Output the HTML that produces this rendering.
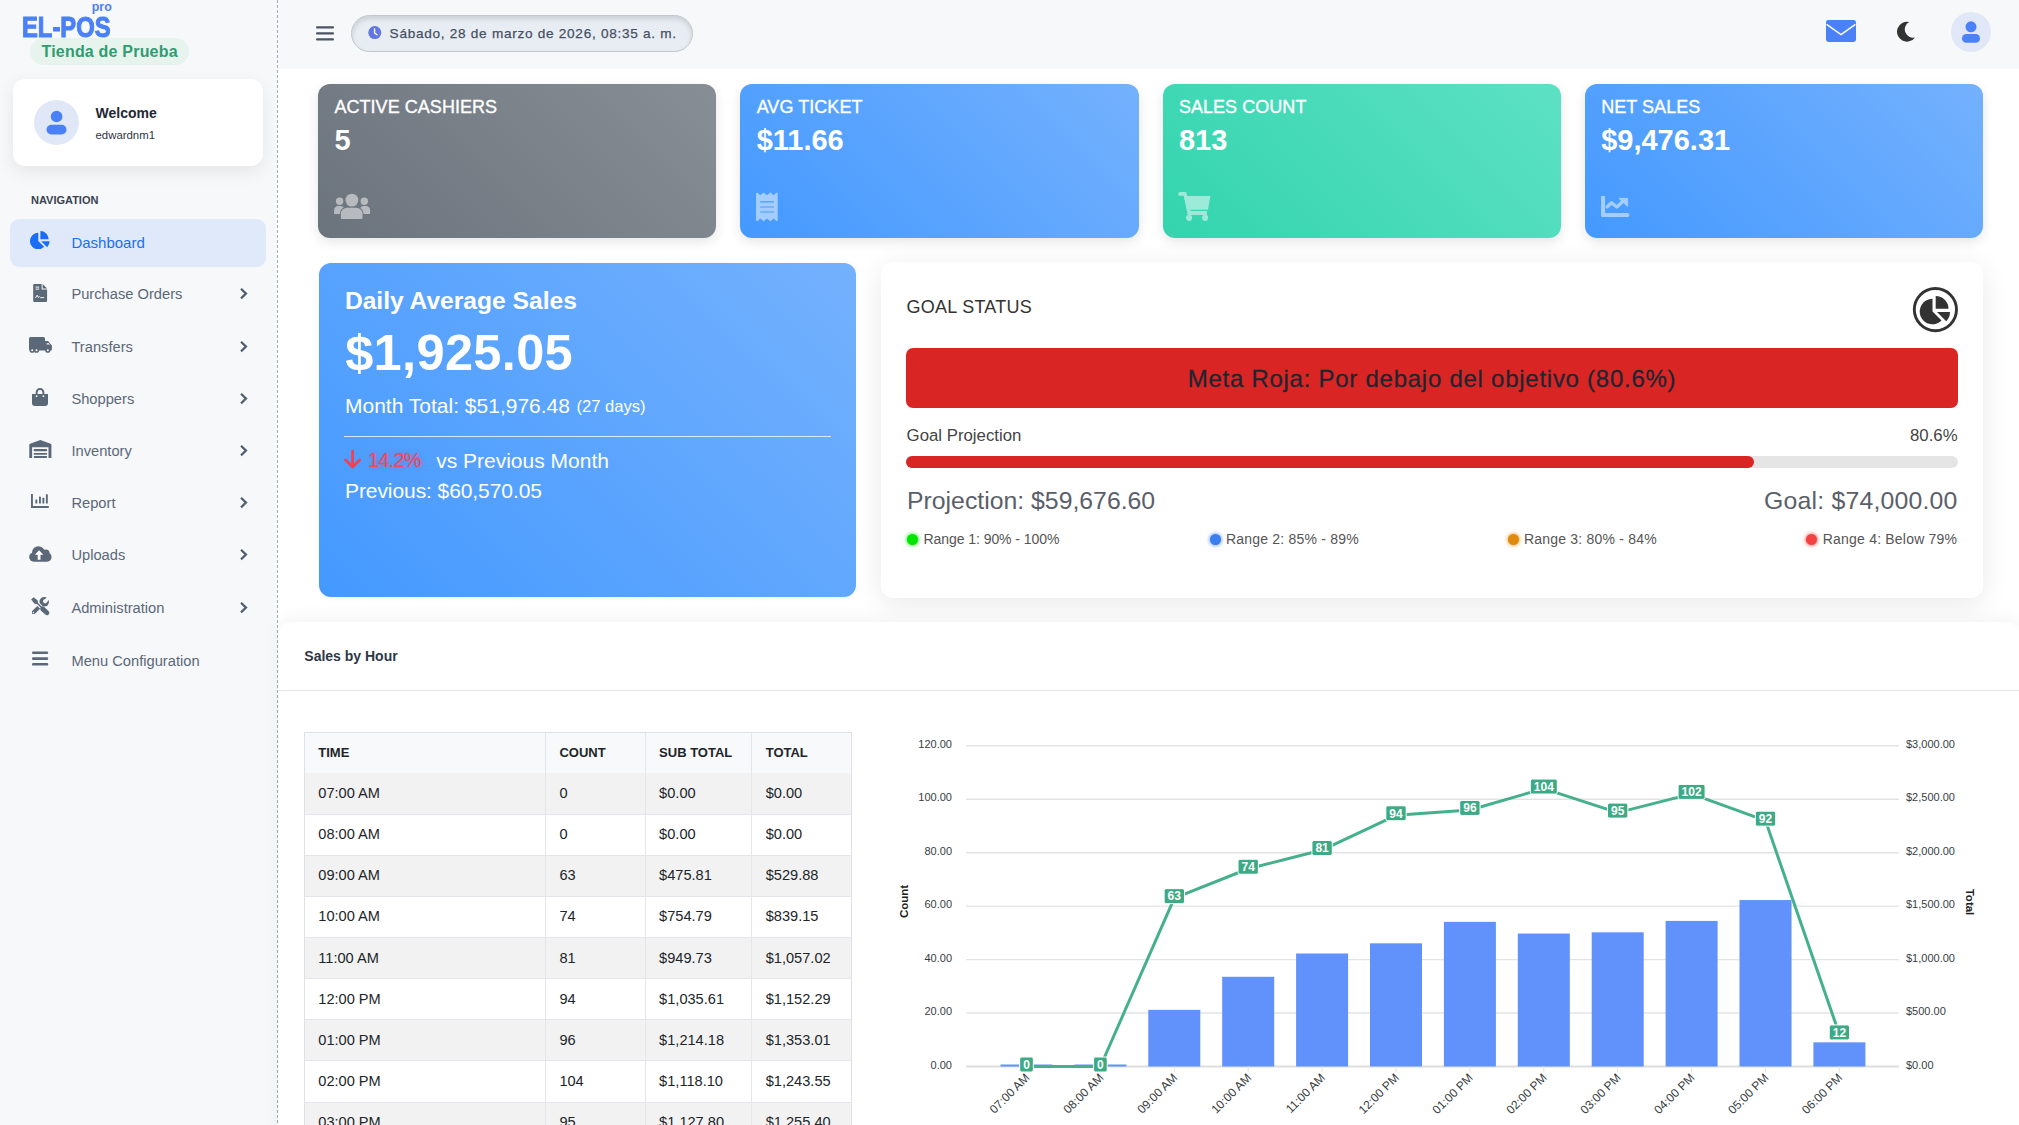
<!DOCTYPE html>
<html><head><meta charset="utf-8">
<style>
*{box-sizing:border-box;margin:0;padding:0}
html,body{width:2019px;height:1125px;overflow:hidden;background:#fff;font-family:"Liberation Sans",sans-serif}
.abs{position:absolute}
#sidebar{position:absolute;left:0;top:0;width:277px;height:1125px;background:#f7f8fa}
#sbline{position:absolute;left:277px;top:0;width:1px;height:1125px;background:repeating-linear-gradient(to bottom,#a3adb8 0 3px,transparent 3px 5px)}
#topbar{position:absolute;left:278px;top:0;width:1741px;height:69px;background:#f7f8fa}
.t{position:absolute;white-space:nowrap;line-height:1}
</style></head>
<body>
<div id="sidebar">
<div class="t" style="left:91.8px;top:1.2px;font-size:12.4px;font-weight:700;color:#4a80f8">pro</div>
<div class="t" style="left:22.3px;top:13.23px;font-size:29px;font-weight:700;color:#4a80f8;transform:scaleX(0.82);transform-origin:0 0;-webkit-text-stroke:1.1px #4a80f8">EL-POS</div>
<div class="abs" style="left:30px;top:38px;width:159px;height:27px;border-radius:14px;background:#e7f4ee"></div>
<div class="t" style="left:41.5px;top:44.32px;font-size:16px;font-weight:700;color:#2f9c72;letter-spacing:0.2px">Tienda de Prueba</div>
<div class="abs" style="left:13px;top:79px;width:250px;height:87px;background:#fff;border-radius:12px;box-shadow:0 6px 18px rgba(0,0,0,.08)"></div>
<div class="abs" style="left:34px;top:100px;width:45px;height:45px;border-radius:50%;background:#e0e7f7"></div>
<svg class="abs" style="left:34px;top:100px" width="45" height="45"><circle cx="22.6" cy="16.5" r="5.8" fill="#4a80f8"/><rect x="12.5" y="24.8" width="20" height="9.7" rx="4.85" fill="#4a80f8"/></svg>
<div class="t" style="left:95.5px;top:106.18px;font-size:14px;font-weight:700;color:#1f2733;">Welcome</div>
<div class="t" style="left:95.5px;top:129.8px;font-size:11.4px;color:#2d3540">edwardnm1</div>
<div class="t" style="left:31px;top:194.57px;font-size:11px;font-weight:700;color:#3a4250;">NAVIGATION</div>
<div class="abs" style="left:10px;top:219px;width:256px;height:48px;border-radius:9px;background:#dfe9f9"></div>
<svg class="abs" style="left:30.2px;top:231px" width="19.6" height="18.3" viewBox="7.7 10 30.3 28.3"><path d="M20.5,12.7 V25.5 L29.55,34.55 A12.8,12.8 0 1 1 20.5,12.7 Z" fill="#1a6ef5"/><path d="M23.7,22.8 V10 A12.8,12.8 0 0 1 36.5,22.8 Z" fill="#1a6ef5"/><path d="M25,26 H38 A13,13 0 0 1 34.2,35.2 Z" fill="#1a6ef5"/></svg>
<div class="t" style="left:71.4px;top:234.95px;font-size:15px;font-weight:400;color:#1a6ef5;">Dashboard</div>
<div class="t" style="left:71.4px;top:287.39px;font-size:14.7px;font-weight:400;color:#5b6878;">Purchase Orders</div>
<svg class="abs" style="left:33px;top:284px" width="15" height="18" viewBox="0 0 15 18"><path d="M0.2,1.2 a1.2,1.2 0 0 1 1.2,-1.2 H8.6 V5.6 H14.1 V16.8 a1.2,1.2 0 0 1 -1.2,1.2 H1.4 a1.2,1.2 0 0 1 -1.2,-1.2 Z" fill="#5a6878"/><path d="M9.6,0 L14.1,4.6 H9.6 Z" fill="#5a6878"/><rect x="2.6" y="2.6" width="3.6" height="1" fill="#fff"/><rect x="2.6" y="4.6" width="3.6" height="1" fill="#fff"/><path d="M2.4,14 L4.2,11.2 L5.2,13.4 L6.4,12.6 L7.4,13.6 L11.2,13.6" stroke="#fff" stroke-width="0.9" fill="none"/></svg>
<svg class="abs" style="left:239px;top:286.7px" width="10" height="13" viewBox="0 0 10 13"><path d="M2,1.8 L7,6.6 L2,11.4" stroke="#4f5f70" stroke-width="2.2" fill="none" stroke-linejoin="miter"/></svg>
<div class="t" style="left:71.4px;top:340.19px;font-size:14.7px;font-weight:400;color:#5b6878;">Transfers</div>
<svg class="abs" style="left:28.5px;top:337.3px" width="24" height="17" viewBox="0 0 24 17"><path d="M0,1.6 a1.6,1.6 0 0 1 1.6,-1.6 H14.4 a1.6,1.6 0 0 1 1.6,1.6 V4 H19 L22.9,8.4 V12.6 a1,1 0 0 1 -1,1 H1.6 a1.6,1.6 0 0 1 -1.6,-1.6 Z" fill="#5a6878"/><circle cx="3.2" cy="13.2" r="2.6" fill="#5a6878"/><circle cx="7.5" cy="13.2" r="2.6" fill="#5a6878"/><circle cx="18.8" cy="13.2" r="2.6" fill="#5a6878"/><circle cx="3.2" cy="13.2" r="1" fill="#fff"/><circle cx="7.5" cy="13.2" r="1" fill="#fff"/><circle cx="18.8" cy="13.2" r="1" fill="#fff"/><path d="M17.6,6.2 H19.6 L21,7.6 H17.6 Z" fill="#fff"/></svg>
<svg class="abs" style="left:239px;top:339.5px" width="10" height="13" viewBox="0 0 10 13"><path d="M2,1.8 L7,6.6 L2,11.4" stroke="#4f5f70" stroke-width="2.2" fill="none" stroke-linejoin="miter"/></svg>
<div class="t" style="left:71.4px;top:392.49px;font-size:14.7px;font-weight:400;color:#5b6878;">Shoppers</div>
<svg class="abs" style="left:32px;top:388px" width="16" height="18" viewBox="0 0 16 18"><path d="M4.6,7.2 V4.4 a3.4,3.4 0 0 1 6.8,0 V7.2" stroke="#5a6878" stroke-width="1.9" fill="none"/><path d="M0,6 H16 V15 a3,3 0 0 1 -3,3 H3 a3,3 0 0 1 -3,-3 Z" fill="#5a6878"/><circle cx="4.6" cy="8.2" r="0.9" fill="#fff"/><circle cx="11.4" cy="8.2" r="0.9" fill="#fff"/></svg>
<svg class="abs" style="left:239px;top:391.8px" width="10" height="13" viewBox="0 0 10 13"><path d="M2,1.8 L7,6.6 L2,11.4" stroke="#4f5f70" stroke-width="2.2" fill="none" stroke-linejoin="miter"/></svg>
<div class="t" style="left:71.4px;top:444.49px;font-size:14.7px;font-weight:400;color:#5b6878;">Inventory</div>
<svg class="abs" style="left:28.7px;top:440px" width="23" height="18" viewBox="0 0 23 18"><path d="M0.3,4.8 Q0.3,4 1.1,3.7 L11.4,0.1 L21.6,3.7 Q22.4,4 22.4,4.8 V17.9 H19.5 V7.3 H3.1 V17.9 H0.3 Z" fill="#5a6878"/><rect x="4.6" y="9.1" width="13.6" height="2.2" rx="1" fill="#5a6878"/><rect x="4.6" y="13.1" width="13.6" height="1.7" rx="0.8" fill="#5a6878"/><rect x="4.6" y="16.1" width="13.6" height="1.8" rx="0.8" fill="#5a6878"/></svg>
<svg class="abs" style="left:239px;top:443.8px" width="10" height="13" viewBox="0 0 10 13"><path d="M2,1.8 L7,6.6 L2,11.4" stroke="#4f5f70" stroke-width="2.2" fill="none" stroke-linejoin="miter"/></svg>
<div class="t" style="left:71.4px;top:496.49px;font-size:14.7px;font-weight:400;color:#5b6878;">Report</div>
<svg class="abs" style="left:31.2px;top:494px" width="18" height="14" viewBox="0 0 18 14"><rect x="0" y="0" width="1.9" height="14" fill="#5a6878"/><rect x="0" y="12" width="17.8" height="2" fill="#5a6878"/><rect x="4.4" y="5.6" width="1.9" height="4" rx="0.5" fill="#5a6878"/><rect x="8" y="2.6" width="1.9" height="7" rx="0.5" fill="#5a6878"/><rect x="11.4" y="3.8" width="1.9" height="5.8" rx="0.5" fill="#5a6878"/><rect x="14.9" y="0.2" width="1.9" height="9.4" rx="0.5" fill="#5a6878"/></svg>
<svg class="abs" style="left:239px;top:495.8px" width="10" height="13" viewBox="0 0 10 13"><path d="M2,1.8 L7,6.6 L2,11.4" stroke="#4f5f70" stroke-width="2.2" fill="none" stroke-linejoin="miter"/></svg>
<div class="t" style="left:71.4px;top:548.49px;font-size:14.7px;font-weight:400;color:#5b6878;">Uploads</div>
<svg class="abs" style="left:28.7px;top:546.4px" width="23" height="16" viewBox="0 0 23 16"><circle cx="9.4" cy="6.6" r="6.4" fill="#5a6878"/><circle cx="16.8" cy="7.4" r="3.8" fill="#5a6878"/><rect x="0.15" y="6.4" width="22.45" height="9.3" rx="4.65" fill="#5a6878"/><path d="M10.1,4.2 L5.9,8.8 H8.7 V13.8 H11.5 V8.8 H14.4 Z" fill="#fff"/></svg>
<svg class="abs" style="left:239px;top:547.8px" width="10" height="13" viewBox="0 0 10 13"><path d="M2,1.8 L7,6.6 L2,11.4" stroke="#4f5f70" stroke-width="2.2" fill="none" stroke-linejoin="miter"/></svg>
<div class="t" style="left:71.4px;top:601.19px;font-size:14.7px;font-weight:400;color:#5b6878;">Administration</div>
<svg class="abs" style="left:30.8px;top:597px" width="21" height="21" viewBox="0 0 21 21"><defs><mask id="mT"><rect x="-2" y="-2" width="23" height="23" fill="#fff"/><path d="M5.2,5.4 L11.8,11.8" stroke="#000" stroke-width="3.6"/><circle cx="14.1" cy="4.3" r="2.1" fill="#000"/><path d="M14.1,4.3 L19.5,-1.1" stroke="#000" stroke-width="3.3"/></mask></defs><g mask="url(#mT)"><circle cx="13.2" cy="4.8" r="4.8" fill="#5a6878"/><path d="M11.2,6.9 L2.6,15.4" stroke="#5a6878" stroke-width="4" stroke-linecap="round"/></g><circle cx="2.5" cy="15.6" r="0.8" fill="#fff"/><path d="M0.2,2.5 L2.6,0.2 L6.7,3.5 L7,5.8 L5.8,7 L3.5,6.7 Z" fill="#5a6878"/><path d="M6,6 L10.8,10.8" stroke="#5a6878" stroke-width="1.5"/><path d="M11.6,11.9 L15.9,15.8" stroke="#5a6878" stroke-width="4.8" stroke-linecap="round"/></svg>
<svg class="abs" style="left:239px;top:600.5px" width="10" height="13" viewBox="0 0 10 13"><path d="M2,1.8 L7,6.6 L2,11.4" stroke="#4f5f70" stroke-width="2.2" fill="none" stroke-linejoin="miter"/></svg>
<div class="t" style="left:71.4px;top:653.59px;font-size:14.7px;font-weight:400;color:#5b6878;">Menu Configuration</div>
<svg class="abs" style="left:32px;top:651px" width="17" height="15" viewBox="0 0 17 15"><rect x="0" y="0.4" width="16.2" height="2.6" rx="1.2" fill="#5a6878"/><rect x="0" y="6.3" width="16.2" height="2.6" rx="1.2" fill="#5a6878"/><rect x="0" y="12" width="16.2" height="2.6" rx="1.2" fill="#5a6878"/></svg>
</div>
<div id="sbline"></div>
<div id="topbar"></div>
<svg class="abs" style="left:316px;top:26px" width="19" height="15"><rect x="0" y="0.3" width="18" height="2.1" rx="1" fill="#4b5563"/><rect x="0" y="6.3" width="18" height="2.1" rx="1" fill="#4b5563"/><rect x="0" y="12.3" width="18" height="2.1" rx="1" fill="#4b5563"/></svg>
<div class="abs" style="left:351px;top:15px;width:342px;height:37px;border-radius:19px;background:#e8edf4;border:1px solid #c2c7ce;box-shadow:inset 0 3px 5px rgba(0,0,0,.13)"></div>
<svg class="abs" style="left:368px;top:25.6px" width="14" height="14" viewBox="0 0 14 14"><circle cx="6.8" cy="6.6" r="6.5" fill="#6276e6"/><path d="M6.6,3 V7 L9,8.8" stroke="#fff" stroke-width="1.4" fill="none" stroke-linecap="round"/></svg>
<div class="t" style="left:389.6px;top:26.53px;font-size:13.6px;font-weight:400;color:#465062;letter-spacing:0.72px;-webkit-text-stroke:0.25px #465062">Sábado, 28 de marzo de 2026, 08:35 a. m.</div>
<svg class="abs" style="left:1826px;top:20px" width="30" height="22" viewBox="0 0 30 22"><rect x="0" y="0" width="30" height="22" rx="2.4" fill="#4a80f8"/><path d="M0.6,4.4 L15,14.6 L29.4,4.4" stroke="#fff" stroke-width="1.5" fill="none"/></svg>
<svg class="abs" style="left:1896px;top:21px" width="20" height="21" viewBox="0 0 20 21"><path d="M13.2,1.1 A9.9,9.9 0 1 0 19.05,16.4 A8.25,8.25 0 0 1 13.2,1.1 Z" fill="#333"/></svg>
<div class="abs" style="left:1951px;top:12px;width:40px;height:40px;border-radius:50%;background:#e0e7f7"></div>
<svg class="abs" style="left:1951px;top:12px" width="40" height="40"><circle cx="20" cy="14.8" r="5.5" fill="#4a80f8"/><rect x="11" y="22" width="18" height="8.8" rx="4.4" fill="#4a80f8"/></svg>
<div class="abs" style="left:318px;top:84px;width:398.25px;height:154px;border-radius:12px;background:linear-gradient(45deg,#6b737c 0%,#878e96 100%);box-shadow:0 4px 12px rgba(0,0,0,.10)"></div>
<div class="t" style="left:334.4px;top:97.66px;font-size:18px;font-weight:400;color:#fff;letter-spacing:0.05px;-webkit-text-stroke:0.35px #fff">ACTIVE CASHIERS</div>
<div class="t" style="left:334.4px;top:126.43px;font-size:29px;font-weight:700;color:#fff;">5</div>
<div style="opacity:.5"><svg class="abs" style="left:333.6px;top:193px" width="37" height="27" viewBox="0 0 37 27"><defs><mask id="mU"><rect width="37" height="27" fill="#fff"/><path d="M6.9,21 a6.2,6.2 0 0 1 6.2,-6.2 H22.3 a6.2,6.2 0 0 1 6.2,6.2 V25 a1,1 0 0 1 -1,1 H7.9 a1,1 0 0 1 -1,-1 Z" fill="#000" stroke="#000" stroke-width="2.2"/></mask></defs><g mask="url(#mU)"><circle cx="5.6" cy="8.2" r="3.7" fill="#fff"/><circle cx="30.3" cy="8.2" r="3.7" fill="#fff"/><path d="M0.1,17.2 a4.2,4.2 0 0 1 4.2,-4.2 H6.4 a4.2,4.2 0 0 1 4.2,4.2 V21 H0.1 Z" fill="#fff"/><path d="M25.6,17.2 a4.2,4.2 0 0 1 4.2,-4.2 H31.9 a4.2,4.2 0 0 1 4.2,4.2 V21 H25.6 Z" fill="#fff"/></g><circle cx="17.9" cy="7.1" r="6.4" fill="#fff"/><path d="M6.9,21 a6.2,6.2 0 0 1 6.2,-6.2 H22.3 a6.2,6.2 0 0 1 6.2,6.2 V25 a1,1 0 0 1 -1,1 H7.9 a1,1 0 0 1 -1,-1 Z" fill="#fff"/></svg></div>
<div class="abs" style="left:740.25px;top:84px;width:398.25px;height:154px;border-radius:12px;background:linear-gradient(45deg,#4499ff 0%,#74b1fd 100%);box-shadow:0 4px 12px rgba(0,0,0,.10)"></div>
<div class="t" style="left:756.65px;top:97.66px;font-size:18px;font-weight:400;color:#fff;letter-spacing:0.05px;-webkit-text-stroke:0.35px #fff">AVG TICKET</div>
<div class="t" style="left:756.65px;top:126.43px;font-size:29px;font-weight:700;color:#fff;">$11.66</div>
<div style="opacity:.5"><svg class="abs" style="left:756.2px;top:191.5px" width="22" height="30" viewBox="0 0 22 30"><path fill-rule="evenodd" fill="#fff" d="M0,1.2 L1.2,0.4 L4.3,3.3 L7.5,0.4 L11,3.3 L14.4,0.4 L17.8,3.3 L20.6,0.4 L21.7,1.2 V28.4 L20.6,29.2 L17.8,26.6 L14.4,29.2 L11,26.6 L7.5,29.2 L4.3,26.6 L1.2,29.2 L0,28.4 Z M4.7,9.3 H17.4 a0.6,0.6 0 0 1 0,1.2 H4.7 a0.6,0.6 0 0 1 0,-1.2 Z M4.7,14.4 H17.4 a0.6,0.6 0 0 1 0,1.2 H4.7 a0.6,0.6 0 0 1 0,-1.2 Z M4.7,19.4 H17.4 a0.6,0.6 0 0 1 0,1.2 H4.7 a0.6,0.6 0 0 1 0,-1.2 Z"/></svg></div>
<div class="abs" style="left:1162.5px;top:84px;width:398.25px;height:154px;border-radius:12px;background:linear-gradient(45deg,#33d4ae 0%,#5de1c5 100%);box-shadow:0 4px 12px rgba(0,0,0,.10)"></div>
<div class="t" style="left:1178.9px;top:97.66px;font-size:18px;font-weight:400;color:#fff;letter-spacing:0.05px;-webkit-text-stroke:0.35px #fff">SALES COUNT</div>
<div class="t" style="left:1178.9px;top:126.43px;font-size:29px;font-weight:700;color:#fff;">813</div>
<div style="opacity:.5"><svg class="abs" style="left:1177.8px;top:190px" width="34" height="31" viewBox="0 0 34 31"><rect x="0.2" y="2" width="8.7" height="3.8" rx="1.9" fill="#fff"/><path d="M6,6 H32.4 L30,19.8 H8.9 Z" fill="#fff"/><path d="M5.6,5 L9.2,5 L12.6,21.1 H28.9 V25.1 H9.8 Z" fill="#fff"/><circle cx="11.1" cy="27.8" r="3.1" fill="#fff"/><circle cx="27.1" cy="27.8" r="3.1" fill="#fff"/></svg></div>
<div class="abs" style="left:1584.75px;top:84px;width:398.25px;height:154px;border-radius:12px;background:linear-gradient(45deg,#4499ff 0%,#74b1fd 100%);box-shadow:0 4px 12px rgba(0,0,0,.10)"></div>
<div class="t" style="left:1601.15px;top:97.66px;font-size:18px;font-weight:400;color:#fff;letter-spacing:0.05px;-webkit-text-stroke:0.35px #fff">NET SALES</div>
<div class="t" style="left:1601.15px;top:126.43px;font-size:29px;font-weight:700;color:#fff;">$9,476.31</div>
<div style="opacity:.5"><svg class="abs" style="left:1600.9px;top:196px" width="30" height="22" viewBox="0 0 30 22"><path d="M0,0 H4.1 V17.1 H26.5 a1.95,1.95 0 0 1 0,3.9 H1.5 a1.5,1.5 0 0 1 -1.5,-1.5 Z" fill="#fff"/><polyline points="6.2,10.8 10.5,6.8 15.8,11 22.2,5.2" stroke="#fff" stroke-width="3.3" fill="none" stroke-linecap="round" stroke-linejoin="round"/><path d="M17.9,2.4 H26.6 V10.3 Z" fill="#fff" stroke="#fff" stroke-width="1" stroke-linejoin="round"/></svg></div>
<div class="abs" style="left:319px;top:263px;width:537px;height:334px;border-radius:12px;background:linear-gradient(45deg,#4499ff 0%,#74b1fd 100%);box-shadow:0 1px 4px rgba(0,0,0,.05)"></div>
<div class="t" style="left:344.9px;top:289.00px;font-size:24.6px;font-weight:700;color:#fff;">Daily Average Sales</div>
<div class="t" style="left:345.2px;top:328.44px;font-size:50.5px;font-weight:700;color:#fff;letter-spacing:0.35px">$1,925.05</div>
<div class="t" style="left:345px;top:394.97px;font-size:21px;font-weight:400;color:#fff;">Month Total: $51,976.48</div>
<div class="t" style="left:576.4px;top:398.84px;font-size:16.6px;font-weight:400;color:#fff;">(27 days)</div>
<div class="abs" style="left:344px;top:436px;width:487px;height:1px;background:rgba(255,255,255,.75)"></div>
<svg class="abs" style="left:343px;top:450px" width="20" height="19" viewBox="0 0 20 19"><path d="M9.6,1 V16" stroke="#f2404f" stroke-width="2.8" stroke-linecap="round"/><path d="M2.6,10 L9.6,17 L16.6,10" stroke="#f2404f" stroke-width="2.8" fill="none" stroke-linecap="round" stroke-linejoin="round"/></svg>
<div class="t" style="left:368px;top:449.80px;font-size:20px;font-weight:400;color:#f5465a;letter-spacing:-0.8px;text-shadow:0 0 4px rgba(255,40,70,.45)">14.2%</div>
<div class="t" style="left:436.2px;top:449.67px;font-size:21px;font-weight:400;color:#fff;">vs Previous Month</div>
<div class="t" style="left:345px;top:479.77px;font-size:21px;font-weight:400;color:#fff;letter-spacing:-0.08px">Previous: $60,570.05</div>
<div class="abs" style="left:881px;top:262px;width:1102px;height:336px;border-radius:12px;background:#fff;box-shadow:0 6px 28px rgba(0,0,0,.09)"></div>
<div class="t" style="left:906.6px;top:297.96px;font-size:18px;font-weight:400;color:#333;letter-spacing:0.25px">GOAL STATUS</div>
<svg class="abs" style="left:1912px;top:286px" width="47" height="47" viewBox="0 0 47 47"><circle cx="23.4" cy="23.6" r="21.1" stroke="#333" stroke-width="2.9" fill="none"/><path d="M20.5,12.7 V25.5 L29.55,34.55 A12.8,12.8 0 1 1 20.5,12.7 Z" fill="#333"/><path d="M23.7,22.8 V10 A12.8,12.8 0 0 1 36.5,22.8 Z" fill="#333"/><path d="M25,26 H38 A13,13 0 0 1 34.2,35.2 Z" fill="#333"/></svg><div class="abs" style="left:906px;top:348px;width:1052px;height:60px;border-radius:7px;background:#da2525"></div>
<div class="t" style="left:906px;width:1052px;text-align:center;top:366.58px;font-size:24px;color:#1e2530;letter-spacing:0.74px;-webkit-text-stroke:0.3px #1e2530">Meta Roja: Por debajo del objetivo (80.6%)</div>
<div class="t" style="left:906.6px;top:427.92px;font-size:16.8px;font-weight:400;color:#444;">Goal Projection</div>
<div class="t" style="right:61.40000000000009px;top:427.92px;font-size:16.8px;color:#444">80.6%</div>
<div class="abs" style="left:906px;top:456px;width:1052px;height:12px;border-radius:6px;background:#e5e5e5"></div>
<div class="abs" style="left:906px;top:456px;width:848px;height:12px;border-radius:6px;background:#da2525"></div>
<div class="t" style="left:907px;top:489.48px;font-size:24.8px;font-weight:400;color:#5a6069;">Projection: $59,676.60</div>
<div class="t" style="right:61.40000000000009px;top:489.48px;font-size:24.8px;color:#5a6069;letter-spacing:0.21px">Goal: $74,000.00</div>
<div class="abs" style="left:907px;top:533.6px;width:11px;height:11px;border-radius:50%;background:#00e600;box-shadow:0 0 4px #00e600"></div>
<div class="t" style="left:923.4px;top:532.18px;font-size:14px;font-weight:400;color:#555;letter-spacing:-0.05px">Range 1: 90% - 100%</div>
<div class="abs" style="left:1209.6px;top:533.6px;width:11px;height:11px;border-radius:50%;background:#3b7ef0;box-shadow:0 0 4px #3b7ef0"></div>
<div class="t" style="left:1226.0px;top:532.18px;font-size:14px;font-weight:400;color:#555;letter-spacing:0.2px">Range 2: 85% - 89%</div>
<div class="abs" style="left:1507.6px;top:533.6px;width:11px;height:11px;border-radius:50%;background:#e08a0b;box-shadow:0 0 4px #e08a0b"></div>
<div class="t" style="left:1524.0px;top:532.18px;font-size:14px;font-weight:400;color:#555;letter-spacing:0.2px">Range 3: 80% - 84%</div>
<div class="abs" style="left:1806.4px;top:533.6px;width:11px;height:11px;border-radius:50%;background:#f44141;box-shadow:0 0 4px #f44141"></div>
<div class="t" style="left:1822.8000000000002px;top:532.18px;font-size:14px;font-weight:400;color:#555;letter-spacing:0.2px">Range 4: Below 79%</div>
<div class="abs" style="left:279px;top:622px;width:1740px;height:600px;border-radius:12px;background:#fff;box-shadow:0 -3px 18px rgba(0,0,0,.05)"></div>
<div class="t" style="left:304.3px;top:648.88px;font-size:14px;font-weight:700;color:#2d3748;">Sales by Hour</div>
<div class="abs" style="left:279px;top:690px;width:1740px;height:1px;background:#e3e7ed"></div>
<div class="abs" style="left:304px;top:732px;width:548px;height:420px;border:1px solid #dee2e6;background:#fff"></div>
<div class="abs" style="left:305px;top:733px;width:546px;height:40px;background:#f8f9fa"></div>
<div class="abs" style="left:305px;top:772.60px;width:546px;height:41.62px;background:#f2f2f2;border-top:none"></div>
<div class="abs" style="left:305px;top:813.73px;width:546px;height:41.62px;background:#fff;border-top:1px solid #e3e6ea"></div>
<div class="abs" style="left:305px;top:854.85px;width:546px;height:41.62px;background:#f2f2f2;border-top:1px solid #e3e6ea"></div>
<div class="abs" style="left:305px;top:895.98px;width:546px;height:41.62px;background:#fff;border-top:1px solid #e3e6ea"></div>
<div class="abs" style="left:305px;top:937.10px;width:546px;height:41.62px;background:#f2f2f2;border-top:1px solid #e3e6ea"></div>
<div class="abs" style="left:305px;top:978.23px;width:546px;height:41.62px;background:#fff;border-top:1px solid #e3e6ea"></div>
<div class="abs" style="left:305px;top:1019.35px;width:546px;height:41.62px;background:#f2f2f2;border-top:1px solid #e3e6ea"></div>
<div class="abs" style="left:305px;top:1060.47px;width:546px;height:41.62px;background:#fff;border-top:1px solid #e3e6ea"></div>
<div class="abs" style="left:305px;top:1101.60px;width:546px;height:41.62px;background:#f2f2f2;border-top:1px solid #e3e6ea"></div>
<div class="abs" style="left:545.0px;top:733px;width:1px;height:400px;background:#e3e6ea"></div>
<div class="abs" style="left:644.7px;top:733px;width:1px;height:400px;background:#e3e6ea"></div>
<div class="abs" style="left:751.0px;top:733px;width:1px;height:400px;background:#e3e6ea"></div>
<div class="t" style="left:318.3px;top:746.31px;font-size:13px;font-weight:700;color:#212529;">TIME</div>
<div class="t" style="left:559.4px;top:746.31px;font-size:13px;font-weight:700;color:#212529;">COUNT</div>
<div class="t" style="left:659.1px;top:746.31px;font-size:13px;font-weight:700;color:#212529;">SUB TOTAL</div>
<div class="t" style="left:765.7px;top:746.31px;font-size:13px;font-weight:700;color:#212529;">TOTAL</div>
<div class="t" style="left:318.3px;top:785.80px;font-size:14.6px;font-weight:400;color:#212529;">07:00 AM</div>
<div class="t" style="left:559.4px;top:785.80px;font-size:14.6px;font-weight:400;color:#212529;">0</div>
<div class="t" style="left:659.1px;top:785.80px;font-size:14.6px;font-weight:400;color:#212529;">$0.00</div>
<div class="t" style="left:765.7px;top:785.80px;font-size:14.6px;font-weight:400;color:#212529;">$0.00</div>
<div class="t" style="left:318.3px;top:827.00px;font-size:14.6px;font-weight:400;color:#212529;">08:00 AM</div>
<div class="t" style="left:559.4px;top:827.00px;font-size:14.6px;font-weight:400;color:#212529;">0</div>
<div class="t" style="left:659.1px;top:827.00px;font-size:14.6px;font-weight:400;color:#212529;">$0.00</div>
<div class="t" style="left:765.7px;top:827.00px;font-size:14.6px;font-weight:400;color:#212529;">$0.00</div>
<div class="t" style="left:318.3px;top:868.20px;font-size:14.6px;font-weight:400;color:#212529;">09:00 AM</div>
<div class="t" style="left:559.4px;top:868.20px;font-size:14.6px;font-weight:400;color:#212529;">63</div>
<div class="t" style="left:659.1px;top:868.20px;font-size:14.6px;font-weight:400;color:#212529;">$475.81</div>
<div class="t" style="left:765.7px;top:868.20px;font-size:14.6px;font-weight:400;color:#212529;">$529.88</div>
<div class="t" style="left:318.3px;top:909.40px;font-size:14.6px;font-weight:400;color:#212529;">10:00 AM</div>
<div class="t" style="left:559.4px;top:909.40px;font-size:14.6px;font-weight:400;color:#212529;">74</div>
<div class="t" style="left:659.1px;top:909.40px;font-size:14.6px;font-weight:400;color:#212529;">$754.79</div>
<div class="t" style="left:765.7px;top:909.40px;font-size:14.6px;font-weight:400;color:#212529;">$839.15</div>
<div class="t" style="left:318.3px;top:950.60px;font-size:14.6px;font-weight:400;color:#212529;">11:00 AM</div>
<div class="t" style="left:559.4px;top:950.60px;font-size:14.6px;font-weight:400;color:#212529;">81</div>
<div class="t" style="left:659.1px;top:950.60px;font-size:14.6px;font-weight:400;color:#212529;">$949.73</div>
<div class="t" style="left:765.7px;top:950.60px;font-size:14.6px;font-weight:400;color:#212529;">$1,057.02</div>
<div class="t" style="left:318.3px;top:991.80px;font-size:14.6px;font-weight:400;color:#212529;">12:00 PM</div>
<div class="t" style="left:559.4px;top:991.80px;font-size:14.6px;font-weight:400;color:#212529;">94</div>
<div class="t" style="left:659.1px;top:991.80px;font-size:14.6px;font-weight:400;color:#212529;">$1,035.61</div>
<div class="t" style="left:765.7px;top:991.80px;font-size:14.6px;font-weight:400;color:#212529;">$1,152.29</div>
<div class="t" style="left:318.3px;top:1033.00px;font-size:14.6px;font-weight:400;color:#212529;">01:00 PM</div>
<div class="t" style="left:559.4px;top:1033.00px;font-size:14.6px;font-weight:400;color:#212529;">96</div>
<div class="t" style="left:659.1px;top:1033.00px;font-size:14.6px;font-weight:400;color:#212529;">$1,214.18</div>
<div class="t" style="left:765.7px;top:1033.00px;font-size:14.6px;font-weight:400;color:#212529;">$1,353.01</div>
<div class="t" style="left:318.3px;top:1074.20px;font-size:14.6px;font-weight:400;color:#212529;">02:00 PM</div>
<div class="t" style="left:559.4px;top:1074.20px;font-size:14.6px;font-weight:400;color:#212529;">104</div>
<div class="t" style="left:659.1px;top:1074.20px;font-size:14.6px;font-weight:400;color:#212529;">$1,118.10</div>
<div class="t" style="left:765.7px;top:1074.20px;font-size:14.6px;font-weight:400;color:#212529;">$1,243.55</div>
<div class="t" style="left:318.3px;top:1115.40px;font-size:14.6px;font-weight:400;color:#212529;">03:00 PM</div>
<div class="t" style="left:559.4px;top:1115.40px;font-size:14.6px;font-weight:400;color:#212529;">95</div>
<div class="t" style="left:659.1px;top:1115.40px;font-size:14.6px;font-weight:400;color:#212529;">$1,127.80</div>
<div class="t" style="left:765.7px;top:1115.40px;font-size:14.6px;font-weight:400;color:#212529;">$1,255.40</div>
<svg class="abs" style="left:0;top:0" width="2019" height="1125" viewBox="0 0 2019 1125"><line x1="966" y1="745.80" x2="1899" y2="745.80" stroke="#e3e3e3" stroke-width="1.4"/><text x="952" y="747.80" text-anchor="end" font-size="11" fill="#373d3f" font-family="Liberation Sans">120.00</text><text x="1906" y="747.80" font-size="11" fill="#373d3f" font-family="Liberation Sans">$3,000.00</text><line x1="966" y1="799.25" x2="1899" y2="799.25" stroke="#e3e3e3" stroke-width="1.4"/><text x="952" y="801.25" text-anchor="end" font-size="11" fill="#373d3f" font-family="Liberation Sans">100.00</text><text x="1906" y="801.25" font-size="11" fill="#373d3f" font-family="Liberation Sans">$2,500.00</text><line x1="966" y1="852.70" x2="1899" y2="852.70" stroke="#e3e3e3" stroke-width="1.4"/><text x="952" y="854.70" text-anchor="end" font-size="11" fill="#373d3f" font-family="Liberation Sans">80.00</text><text x="1906" y="854.70" font-size="11" fill="#373d3f" font-family="Liberation Sans">$2,000.00</text><line x1="966" y1="906.15" x2="1899" y2="906.15" stroke="#e3e3e3" stroke-width="1.4"/><text x="952" y="908.15" text-anchor="end" font-size="11" fill="#373d3f" font-family="Liberation Sans">60.00</text><text x="1906" y="908.15" font-size="11" fill="#373d3f" font-family="Liberation Sans">$1,500.00</text><line x1="966" y1="959.60" x2="1899" y2="959.60" stroke="#e3e3e3" stroke-width="1.4"/><text x="952" y="961.60" text-anchor="end" font-size="11" fill="#373d3f" font-family="Liberation Sans">40.00</text><text x="1906" y="961.60" font-size="11" fill="#373d3f" font-family="Liberation Sans">$1,000.00</text><line x1="966" y1="1013.05" x2="1899" y2="1013.05" stroke="#e3e3e3" stroke-width="1.4"/><text x="952" y="1015.05" text-anchor="end" font-size="11" fill="#373d3f" font-family="Liberation Sans">20.00</text><text x="1906" y="1015.05" font-size="11" fill="#373d3f" font-family="Liberation Sans">$500.00</text><line x1="966" y1="1066.50" x2="1899" y2="1066.50" stroke="#dedede" stroke-width="2"/><text x="952" y="1068.50" text-anchor="end" font-size="11" fill="#373d3f" font-family="Liberation Sans">0.00</text><text x="1906" y="1068.50" font-size="11" fill="#373d3f" font-family="Liberation Sans">$0.00</text><text transform="translate(908.2,901.5) rotate(-90)" text-anchor="middle" font-size="11.5" font-weight="700" fill="#222" font-family="Liberation Sans">Count</text><text transform="translate(1965.8,902) rotate(90)" text-anchor="middle" font-size="11.5" font-weight="700" fill="#222" font-family="Liberation Sans">Total</text><rect x="1000.50" y="1064.50" width="52" height="2.00" fill="#6191fa"/><line x1="1026.50" y1="1066.50" x2="1026.50" y2="1072.50" stroke="#e3e3e3" stroke-width="1"/><text transform="translate(1030.30,1078.50) rotate(-45)" text-anchor="end" font-size="12" fill="#373d3f" font-family="Liberation Sans">07:00 AM</text><rect x="1074.40" y="1064.50" width="52" height="2.00" fill="#6191fa"/><line x1="1100.40" y1="1066.50" x2="1100.40" y2="1072.50" stroke="#e3e3e3" stroke-width="1"/><text transform="translate(1104.20,1078.50) rotate(-45)" text-anchor="end" font-size="12" fill="#373d3f" font-family="Liberation Sans">08:00 AM</text><rect x="1148.30" y="1009.86" width="52" height="56.64" fill="#6191fa"/><line x1="1174.30" y1="1066.50" x2="1174.30" y2="1072.50" stroke="#e3e3e3" stroke-width="1"/><text transform="translate(1178.10,1078.50) rotate(-45)" text-anchor="end" font-size="12" fill="#373d3f" font-family="Liberation Sans">09:00 AM</text><rect x="1222.20" y="976.79" width="52" height="89.71" fill="#6191fa"/><line x1="1248.20" y1="1066.50" x2="1248.20" y2="1072.50" stroke="#e3e3e3" stroke-width="1"/><text transform="translate(1252.00,1078.50) rotate(-45)" text-anchor="end" font-size="12" fill="#373d3f" font-family="Liberation Sans">10:00 AM</text><rect x="1296.10" y="953.50" width="52" height="113.00" fill="#6191fa"/><line x1="1322.10" y1="1066.50" x2="1322.10" y2="1072.50" stroke="#e3e3e3" stroke-width="1"/><text transform="translate(1325.90,1078.50) rotate(-45)" text-anchor="end" font-size="12" fill="#373d3f" font-family="Liberation Sans">11:00 AM</text><rect x="1370.00" y="943.32" width="52" height="123.18" fill="#6191fa"/><line x1="1396.00" y1="1066.50" x2="1396.00" y2="1072.50" stroke="#e3e3e3" stroke-width="1"/><text transform="translate(1399.80,1078.50) rotate(-45)" text-anchor="end" font-size="12" fill="#373d3f" font-family="Liberation Sans">12:00 PM</text><rect x="1443.90" y="921.86" width="52" height="144.64" fill="#6191fa"/><line x1="1469.90" y1="1066.50" x2="1469.90" y2="1072.50" stroke="#e3e3e3" stroke-width="1"/><text transform="translate(1473.70,1078.50) rotate(-45)" text-anchor="end" font-size="12" fill="#373d3f" font-family="Liberation Sans">01:00 PM</text><rect x="1517.80" y="933.56" width="52" height="132.94" fill="#6191fa"/><line x1="1543.80" y1="1066.50" x2="1543.80" y2="1072.50" stroke="#e3e3e3" stroke-width="1"/><text transform="translate(1547.60,1078.50) rotate(-45)" text-anchor="end" font-size="12" fill="#373d3f" font-family="Liberation Sans">02:00 PM</text><rect x="1591.70" y="932.30" width="52" height="134.20" fill="#6191fa"/><line x1="1617.70" y1="1066.50" x2="1617.70" y2="1072.50" stroke="#e3e3e3" stroke-width="1"/><text transform="translate(1621.50,1078.50) rotate(-45)" text-anchor="end" font-size="12" fill="#373d3f" font-family="Liberation Sans">03:00 PM</text><rect x="1665.60" y="920.90" width="52" height="145.60" fill="#6191fa"/><line x1="1691.60" y1="1066.50" x2="1691.60" y2="1072.50" stroke="#e3e3e3" stroke-width="1"/><text transform="translate(1695.40,1078.50) rotate(-45)" text-anchor="end" font-size="12" fill="#373d3f" font-family="Liberation Sans">04:00 PM</text><rect x="1739.50" y="900.06" width="52" height="166.44" fill="#6191fa"/><line x1="1765.50" y1="1066.50" x2="1765.50" y2="1072.50" stroke="#e3e3e3" stroke-width="1"/><text transform="translate(1769.30,1078.50) rotate(-45)" text-anchor="end" font-size="12" fill="#373d3f" font-family="Liberation Sans">05:00 PM</text><rect x="1813.40" y="1042.34" width="52" height="24.16" fill="#6191fa"/><line x1="1839.40" y1="1066.50" x2="1839.40" y2="1072.50" stroke="#e3e3e3" stroke-width="1"/><text transform="translate(1843.20,1078.50) rotate(-45)" text-anchor="end" font-size="12" fill="#373d3f" font-family="Liberation Sans">06:00 PM</text><polyline points="1026.50,1066.50 1100.40,1066.50 1174.30,898.13 1248.20,868.74 1322.10,850.03 1396.00,815.28 1469.90,809.94 1543.80,788.56 1617.70,812.61 1691.60,793.90 1765.50,820.63 1839.40,1034.43" fill="none" stroke="#45b08c" stroke-width="3" stroke-linejoin="round"/><rect x="1019.66" y="1057.00" width="13.67" height="15" rx="2" fill="#3daa85" stroke="#fff" stroke-width="1"/><text x="1026.50" y="1068.80" text-anchor="middle" font-size="12" font-weight="700" fill="#fff" font-family="Liberation Sans">0</text><rect x="1093.57" y="1057.00" width="13.67" height="15" rx="2" fill="#3daa85" stroke="#fff" stroke-width="1"/><text x="1100.40" y="1068.80" text-anchor="middle" font-size="12" font-weight="700" fill="#fff" font-family="Liberation Sans">0</text><rect x="1164.13" y="888.63" width="20.34" height="15" rx="2" fill="#3daa85" stroke="#fff" stroke-width="1"/><text x="1174.30" y="900.43" text-anchor="middle" font-size="12" font-weight="700" fill="#fff" font-family="Liberation Sans">63</text><rect x="1238.03" y="859.24" width="20.34" height="15" rx="2" fill="#3daa85" stroke="#fff" stroke-width="1"/><text x="1248.20" y="871.03" text-anchor="middle" font-size="12" font-weight="700" fill="#fff" font-family="Liberation Sans">74</text><rect x="1311.93" y="840.53" width="20.34" height="15" rx="2" fill="#3daa85" stroke="#fff" stroke-width="1"/><text x="1322.10" y="852.33" text-anchor="middle" font-size="12" font-weight="700" fill="#fff" font-family="Liberation Sans">81</text><rect x="1385.83" y="805.78" width="20.34" height="15" rx="2" fill="#3daa85" stroke="#fff" stroke-width="1"/><text x="1396.00" y="817.58" text-anchor="middle" font-size="12" font-weight="700" fill="#fff" font-family="Liberation Sans">94</text><rect x="1459.73" y="800.44" width="20.34" height="15" rx="2" fill="#3daa85" stroke="#fff" stroke-width="1"/><text x="1469.90" y="812.24" text-anchor="middle" font-size="12" font-weight="700" fill="#fff" font-family="Liberation Sans">96</text><rect x="1530.30" y="779.06" width="27.01" height="15" rx="2" fill="#3daa85" stroke="#fff" stroke-width="1"/><text x="1543.80" y="790.86" text-anchor="middle" font-size="12" font-weight="700" fill="#fff" font-family="Liberation Sans">104</text><rect x="1607.53" y="803.11" width="20.34" height="15" rx="2" fill="#3daa85" stroke="#fff" stroke-width="1"/><text x="1617.70" y="814.91" text-anchor="middle" font-size="12" font-weight="700" fill="#fff" font-family="Liberation Sans">95</text><rect x="1678.09" y="784.40" width="27.01" height="15" rx="2" fill="#3daa85" stroke="#fff" stroke-width="1"/><text x="1691.60" y="796.20" text-anchor="middle" font-size="12" font-weight="700" fill="#fff" font-family="Liberation Sans">102</text><rect x="1755.33" y="811.13" width="20.34" height="15" rx="2" fill="#3daa85" stroke="#fff" stroke-width="1"/><text x="1765.50" y="822.93" text-anchor="middle" font-size="12" font-weight="700" fill="#fff" font-family="Liberation Sans">92</text><rect x="1829.23" y="1024.93" width="20.34" height="15" rx="2" fill="#3daa85" stroke="#fff" stroke-width="1"/><text x="1839.40" y="1036.73" text-anchor="middle" font-size="12" font-weight="700" fill="#fff" font-family="Liberation Sans">12</text></svg>

</body></html>
